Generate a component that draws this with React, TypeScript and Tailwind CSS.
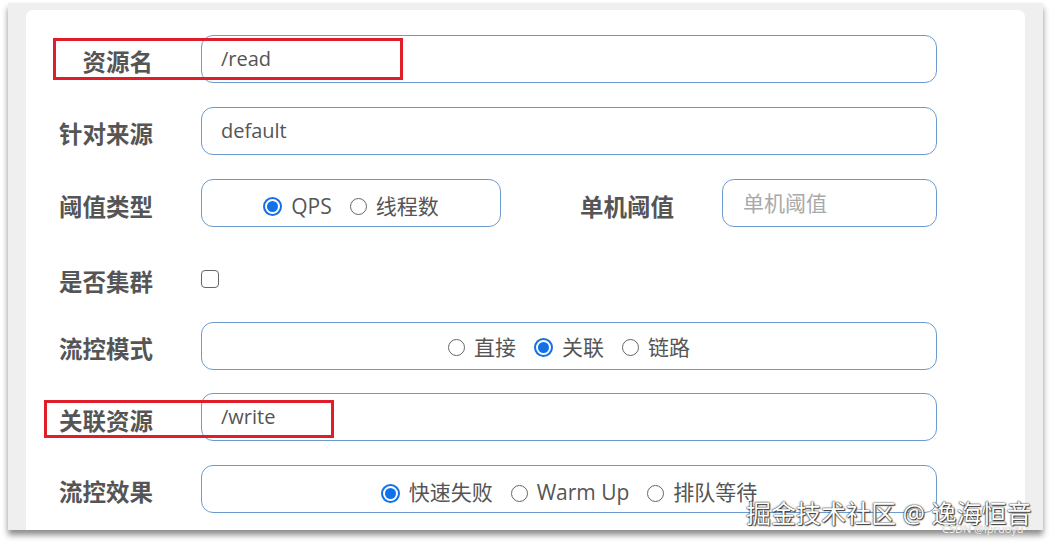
import React from 'react';

const Radio = ({ checked, label }: { checked?: boolean; label: string }) => (
  <span className="flex items-center gap-[9px]">
    {checked ? (
      <span className="w-[19px] h-[19px] rounded-full border-2 border-[#1171e8] flex items-center justify-center bg-white">
        <span className="w-[11px] h-[11px] rounded-full bg-[#1171e8]" />
      </span>
    ) : (
      <span className="w-[17px] h-[17px] rounded-full border-[1.5px] border-[#666] bg-white" />
    )}
    <span className="text-[21px]">{label}</span>
  </span>
);

const Label = ({ children }: { children: React.ReactNode }) => (
  <div className="w-[127px] shrink-0 text-right pt-[8px] text-[23.5px] font-bold text-[#555] leading-none">
    {children}
  </div>
);

const boxCls =
  'h-[48px] rounded-[12px] border-[1.5px] border-[#6c9bcf] bg-white flex items-center text-[20px] text-[#555]';

export default function App() {
  return (
    <div className="w-[1051px] h-[546px] bg-white relative overflow-hidden font-['Open_Sans','Noto_Sans_CJK_SC',sans-serif]">
      {/* outer frame */}
      <div className="ml-[8px] mt-[3px] w-[1035px] h-[527px] bg-[#efefef] pt-[7px] px-[18px] shadow-[0_5px_6px_rgba(0,0,0,0.45)]">
        <div className="relative h-[520px] bg-white rounded-t-[7px] pt-[25px] flex flex-col gap-[23.7px]">
          {/* 资源名 */}
          <div className="flex items-center h-[48px]">
            <Label>资源名</Label>
            <div className={`ml-[48px] w-[736px] pl-[19px] ${boxCls}`}>/read</div>
          </div>

          {/* 针对来源 */}
          <div className="flex items-center h-[48px]">
            <Label>针对来源</Label>
            <div className={`ml-[48px] w-[736px] pl-[19px] ${boxCls}`}>default</div>
          </div>

          {/* 阈值类型 */}
          <div className="flex items-center h-[48px] mt-[1px]">
            <Label>阈值类型</Label>
            <div className={`ml-[48px] w-[300px] justify-center gap-[18px] pt-[6px] ${boxCls}`}>
              <Radio checked label="QPS" />
              <Radio label="线程数" />
            </div>
            <div className="ml-[79px] pt-[8px] text-[23.5px] font-bold text-[#555] leading-none">单机阈值</div>
            <div className={`ml-[48px] w-[215px] pl-[20px] ${boxCls}`}>
              <span className="text-[#a9a9a9] text-[21px]">单机阈值</span>
            </div>
          </div>

          {/* 是否集群 */}
          <div className="flex items-center h-[48px] pt-[9px] -mt-[1px]">
            <Label>是否集群</Label>
            <div className="ml-[48px] w-[18px] h-[18px] rounded-[4px] border-[1.5px] border-[#666]" />
          </div>

          {/* 流控模式 */}
          <div className="flex items-center h-[48px]">
            <Label>流控模式</Label>
            <div className={`ml-[48px] w-[736px] justify-center gap-[18px] pt-[4px] ${boxCls}`}>
              <Radio label="直接" />
              <Radio checked label="关联" />
              <Radio label="链路" />
            </div>
          </div>

          {/* 关联资源 */}
          <div className="flex items-center h-[48px]">
            <Label>关联资源</Label>
            <div className={`ml-[48px] w-[736px] pl-[19px] pb-[1px] ${boxCls}`}>/write</div>
          </div>

          {/* 流控效果 */}
          <div className="flex items-center h-[48px]">
            <Label>流控效果</Label>
            <div className={`ml-[48px] w-[736px] justify-center gap-[18px] pt-[8px] ${boxCls}`}>
              <Radio checked label="快速失败" />
              <Radio label="Warm Up" />
              <Radio label="排队等待" />
            </div>
          </div>

          {/* red highlight boxes */}
          <div className="absolute left-[27px] top-[28px] w-[350px] h-[42px] border-[3px] border-[#e01e2a]" />
          <div className="absolute left-[18px] top-[390px] w-[290px] h-[38px] border-[3px] border-[#e01e2a]" />
        </div>
      </div>

      {/* watermark */}
      <div className="absolute left-[746px] top-[501px] text-[25px] leading-none text-white whitespace-nowrap [text-shadow:0_0_1px_#222,0_0_2px_#333,1px_1px_1px_#444]">
        掘金技术社区 @ 逸海恒音
      </div>
      <div className="absolute left-[942px] top-[523px] text-[11px] leading-none text-white/90 whitespace-nowrap [text-shadow:0_0_1px_#888]">
        CSDN @lpruoyu
      </div>
    </div>
  );
}
